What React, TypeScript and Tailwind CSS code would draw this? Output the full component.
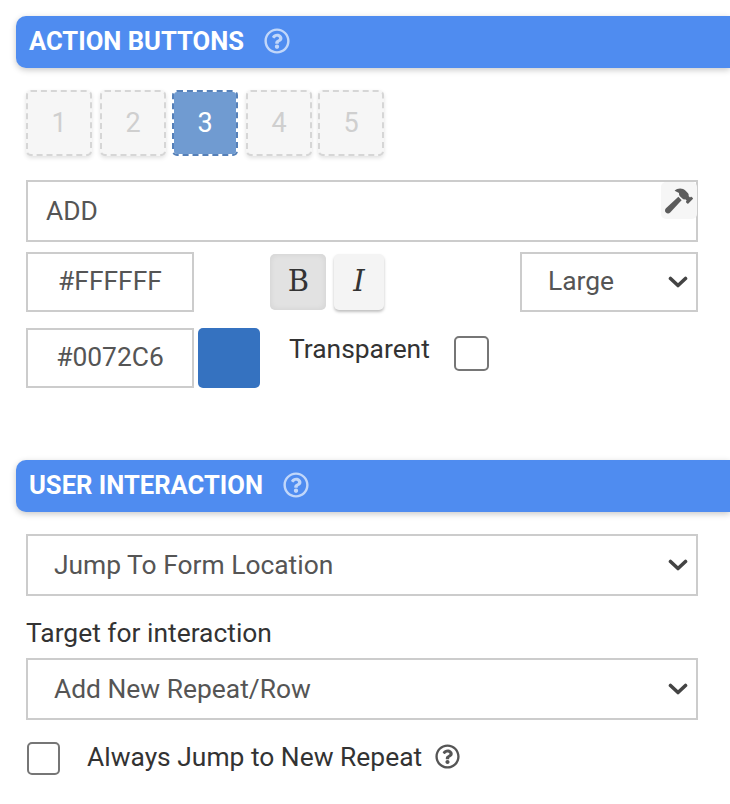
import React from "react";
import { FaHammer, FaRegQuestionCircle } from "react-icons/fa";

function Header({ title }: { title: string }) {
  return (
    <div className="ml-4 flex h-[52px] items-center rounded-l-[10px] bg-[#4f8cf0] pl-[13px] shadow-[0_2px_6px_rgba(0,0,0,0.22)]">
      <span className="text-[25.6px] leading-none font-bold text-white">{title}</span>
      <FaRegQuestionCircle className="mb-[2px] ml-[20px] text-[26px] text-white/65" />
    </div>
  );
}

function Chevron() {
  return (
    <svg viewBox="0 0 20 20" className="pointer-events-none absolute top-1/2 right-[10px] h-[20px] w-[20px] -translate-y-1/2" fill="none" stroke="#444444" strokeWidth="3.6" strokeLinecap="round" strokeLinejoin="round">
      <path d="M2.500 6.500L10 13.500L17.500 6.500" />
    </svg>
  );
}

function SelectBox({ value, className, tall }: { value: string; className: string; tall?: boolean }) {
  return (
    <div className={"relative " + className}>
      <select
        defaultValue={value}
        className={
          tall
            ? "h-full w-full appearance-none rounded-none border-2 border-[#cccccc] bg-white pt-[2px] pl-[26px] text-[26.4px] text-[#555555] outline-none"
            : "h-full w-full appearance-none rounded-none border-2 border-[#cccccc] bg-white pl-[26px] text-[26.4px] text-[#555555] outline-none"
        }
      >
        <option>{value}</option>
      </select>
      <Chevron />
    </div>
  );
}

function ColorInput({ value }: { value: string }) {
  return (
    <input readOnly value={value} className="h-[60px] w-[168px] rounded-none border-2 border-[#cccccc] bg-white pb-[2px] text-center text-[26.4px] text-[#555555] outline-none" />
  );
}

const slots = [
  { n: "1", gap: "mr-2" },
  { n: "2", gap: "mr-1.5" },
  { n: "3", gap: "mr-2" },
  { n: "4", gap: "mr-1.5" },
  { n: "5", gap: "" },
];

export default function App() {
  return (
    <div className="h-[804px] w-[730px] overflow-hidden bg-white pt-4 font-['Roboto',sans-serif] text-[#333333]">
      <Header title="ACTION BUTTONS" />

      <div className="mt-[22px] ml-[26px] flex">
        {slots.map((s) => (
          <div
            key={s.n}
            className={
              s.n === "3"
                ? "mr-2 flex h-[66px] w-[66px] items-center justify-center rounded-[5px] border-2 border-dashed border-[#5580b8] bg-[#709bd1] bg-clip-padding text-[27px] text-white"
                : s.gap + " flex h-[66px] w-[66px] items-center justify-center rounded-[5px] border-2 border-dashed border-[#d6d6d6] bg-[#f6f6f6] text-[27px] text-[#cfcfcf] shadow-[0_2px_4px_rgba(0,0,0,0.12)]"
            }
          >
            {s.n}
          </div>
        ))}
      </div>

      <div className="relative mt-6 mr-8 ml-[26px]">
        <input readOnly value="ADD" className="h-[62px] w-full rounded-none border-2 border-[#cccccc] bg-white pl-[18px] text-[26.4px] text-[#555555] outline-none" />
        <span className="absolute top-[2px] right-[1px] flex h-[37px] w-[36px] items-center justify-center rounded-[5px] bg-[#f6f6f6]">
          <FaHammer className="text-[28px] text-[#5c5c5c]" />
        </span>
      </div>

      <div className="mt-[10px] mr-8 ml-[26px] flex h-[60px] items-center">
        <ColorInput value="#FFFFFF" />
        <span className="ml-1 h-[60px] w-[62px] rounded-[5px] bg-white" />
        <span className="ml-[10px] flex h-[56px] w-[56px] items-center justify-center rounded-[5px] bg-[#e2e2e2] pl-px font-['DejaVu_Serif',serif] text-[29px] text-[#333333] shadow-[inset_0_0_6px_rgba(0,0,0,0.08)]">B</span>
        <span className="ml-2 flex h-[56px] w-[50px] items-center justify-center rounded-[5px] bg-[#f4f4f4] font-['DejaVu_Serif',serif] text-[29px] text-[#333333] italic shadow-[0_2px_3px_rgba(0,0,0,0.25)]">I</span>
        <SelectBox value="Large" className="ml-auto h-[60px] w-[178px]" />
      </div>

      <div className="mt-4 ml-[26px] flex h-[60px] items-start">
        <ColorInput value="#0072C6" />
        <span className="ml-1 h-[60px] w-[62px] rounded-[5px] bg-[#3572c0]" />
        <span className="mt-[5px] ml-[29px] text-[26.4px] leading-[32px] text-[#333333]">Transparent</span>
        <span className="mt-2 ml-6 block h-[35px] w-[35px] rounded-[5px] border-2 border-[#767676] bg-white" />
      </div>

      <div className="mt-[72px]">
        <Header title="USER INTERACTION" />
      </div>

      <div className="mt-[22px] mr-8 ml-[26px]">
        <SelectBox tall value="Jump To Form Location" className="h-[62px] w-full" />
        <div className="mt-[21px] text-[26.4px] leading-[32px] text-[#333333]">Target for interaction</div>
        <SelectBox tall value="Add New Repeat/Row" className="mt-[9px] h-[62px] w-full" />
        <div className="mt-[20px] flex items-start">
          <span className="mt-[2px] ml-px block h-[33px] w-[33px] rounded-[5px] border-2 border-[#767676] bg-white" />
          <span className="mt-px ml-[27px] text-[26.4px] leading-[32px] text-[#333333]">Always Jump to New Repeat</span>
          <FaRegQuestionCircle className="mt-1 ml-[13px] text-[25px] text-[#555555]" />
        </div>
      </div>
    </div>
  );
}
